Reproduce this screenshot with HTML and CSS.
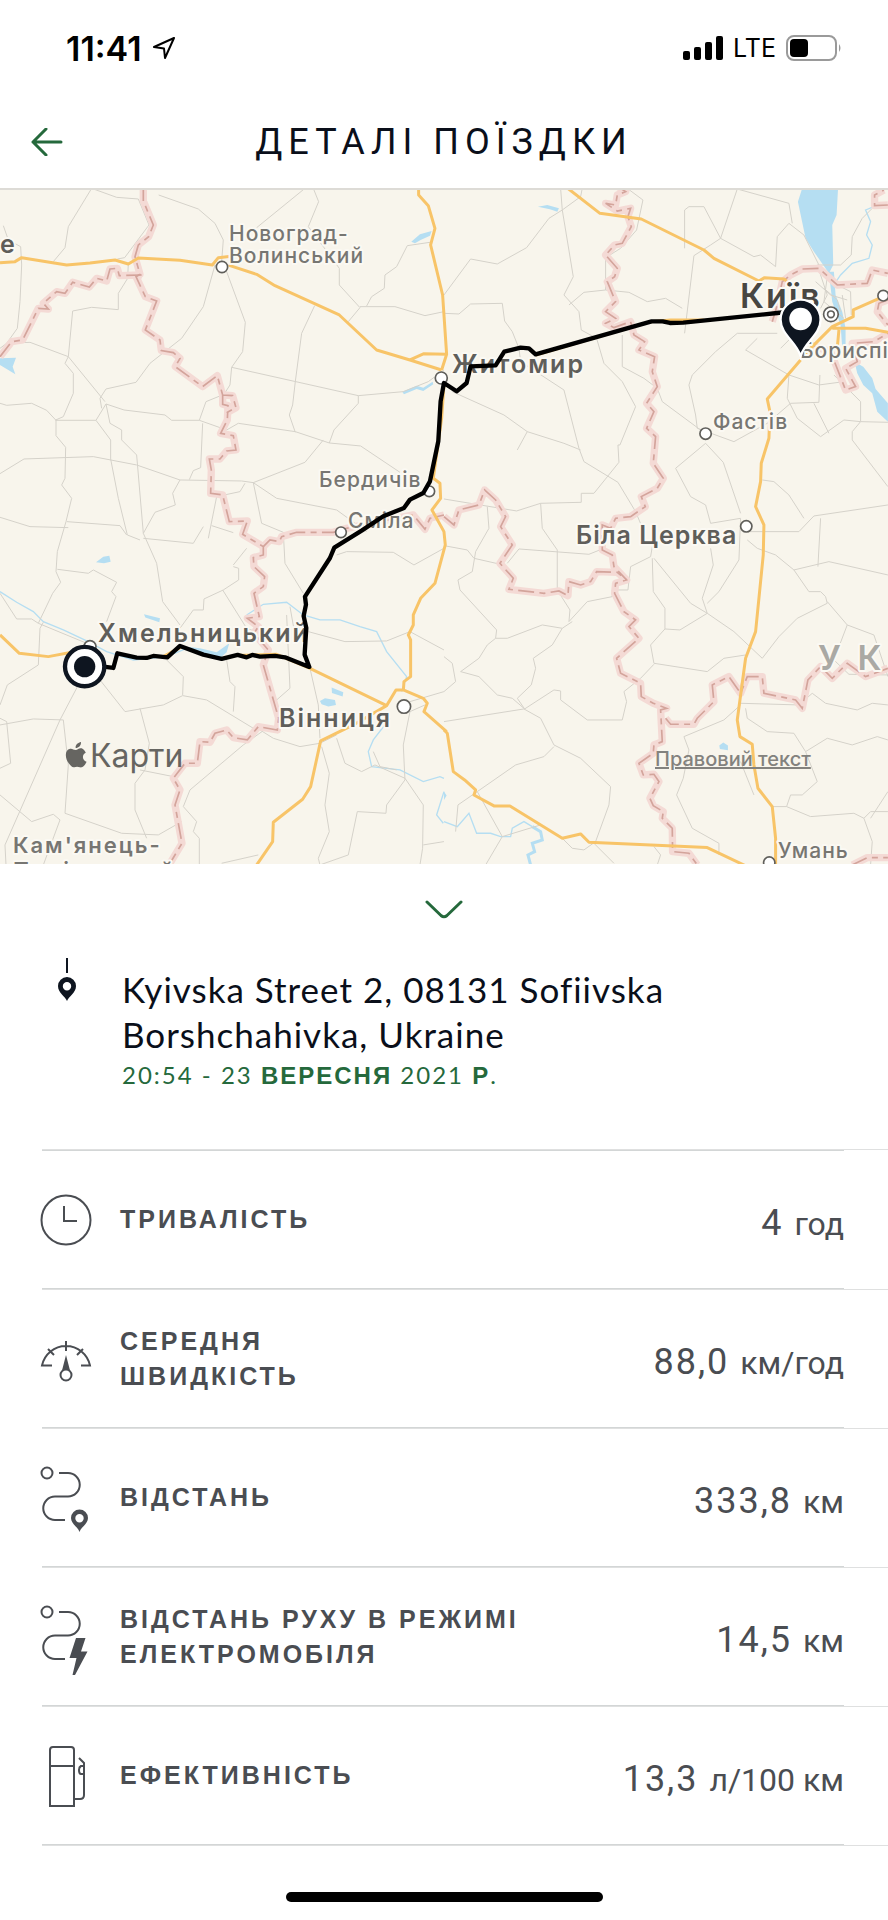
FILE: index.html
```html
<!DOCTYPE html>
<html lang="uk">
<head>
  <meta charset="UTF-8">
  <meta name="viewport" content="width=device-width, initial-scale=1.0">
  <title>Деталі поїздки</title>
  <link rel="stylesheet" href="styles.css">
</head>
<body>
  <div class="status-bar">
    <div class="status-left">
      <span class="time">11:41</span>
      <svg width="24" height="24" viewBox="0 0 24 24" fill="none" stroke="#000" stroke-width="2" stroke-linejoin="round"><path d="M22 2 L2 11 L12 12.500 L13 22 Z"/></svg>
    </div>
    <div class="status-right">
      <svg width="40" height="24" viewBox="0 0 40 24"><rect x="0" y="15" width="7" height="9" rx="2"/><rect x="11" y="11" width="7" height="13" rx="2"/><rect x="22" y="6" width="7" height="18" rx="2"/><rect x="33" y="0" width="7" height="24" rx="2"/></svg>
      <span class="network">LTE</span>
      <svg width="56" height="26" viewBox="0 0 56 26"><rect x="1" y="1" width="49" height="24" rx="7" fill="none" stroke="#9a9a9a" stroke-width="2"/><path d="M53 9 Q56 13 53 17 Z" fill="#9a9a9a"/><rect x="4" y="4" width="18" height="18" rx="4"/></svg>
    </div>
  </div>

  <header class="header">
    <button class="back" type="button" aria-label="Назад">
      <svg width="32" height="28" viewBox="0 0 32 28" fill="none" stroke="#25693c" stroke-width="3" stroke-linecap="round" stroke-linejoin="round"><path d="M30 14 H2 M15 1 L2 14 L15 27"/></svg>
    </button>
    <h1>ДЕТАЛІ ПОЇЗДКИ</h1>
  </header>

  <div class="map">
    <svg viewBox="0 2 888 674" preserveAspectRatio="xMidYMid slice">
      <defs>
        <!-- region borders, drawn twice: wide glow and dashed line -->
        <g id="borders">
          <g transform="translate(0 -9)">
            <path d="M430 0 L430 48 L460 120 L446 155 L415 180 L405 215 L420 268 L408 275 L436 335 L470 348 L436 435 L480 465 L484 497 L520 503 L540 520 L526 545 L608 605 L652 572 L668 630 L698 632 L708 668 L680 683 M668 630 L668 658 L684 662 L682 705 L662 745 L700 752 L708 795 L680 798 L660 822 L628 822 L634 855 L632 925 L668 930 L688 1010 L742 1008 L728 1048 L790 1085 L790 1110 L760 1118 L762 1145 L794 1175 L790 1205 L762 1225 L778 1295 L742 1300 L775 1325 L762 1345 L805 1395 L790 1440 L836 1600 L832 1635 L775 1625 L742 1665 L700 1658 L680 1635 L645 1645 L630 1672 L600 1670 L592 1735 L555 1735 L520 1780 L540 1815 L525 1860 L546 1975 L510 2035"/>
            <path d="M0 515 L35 470 L68 465 L115 370 L145 372 L130 355 L170 320 L195 325 L218 292 L268 306 L290 280 L320 288 L330 252 L352 250 L358 272 L425 270"/>
            <path d="M790 1085 L810 1065 L838 1070 L845 1055 L890 1042 L1000 1042 L1040 1030 L1240 990 L1275 1033 L1290 1000 L1332 990"/>
          </g>
          <g transform="translate(1332 -9)">
            <path d="M515 0 L545 20 L520 30 L515 60 L485 55 L520 78 L560 70 L552 95 L562 125 L535 175 L512 180 L485 210 L520 250 L512 275 L490 290 L515 350 L485 380 L515 400 L485 415 L510 428 L560 410 L570 450 L602 470 L585 495 L632 515 L625 560 L640 605 L608 655 L630 680 L608 730 L635 755 L628 835 L658 880 L640 910 L592 935 L604 965 L560 995 L515 1000 L500 1030 L475 1020 L475 1095 L505 1110 L510 1145 L548 1185 L515 1195 L512 1225 L540 1280 L575 1305 L555 1325 L585 1360 L518 1420 L530 1465 L590 1495 L592 1535 L628 1555 L668 1570 L650 1575 L655 1670 L630 1680 L628 1705 L585 1735 L598 1770 L630 1768 L645 1790 L618 1840 L628 1862 L658 1880 L655 1900 L685 1930 L686 2000 L735 2005 L760 2040"/>
            <path d="M0 995 L30 1020 L45 975 L105 960 L122 915 L155 945 L185 995 L170 1025 L205 1080 L168 1135 L208 1180 L195 1213 L300 1225 L345 1218 L372 1232 L375 1190 L410 1200 L440 1190 L458 1160 L520 1162 L548 1185"/>
            <path d="M665 1600 L680 1618 L750 1618 L760 1600 L810 1550 L805 1500 L855 1475 L890 1525 L910 1475 L955 1475 L960 1525 L1055 1545 L1075 1570 L1092 1485 L1130 1445 L1165 1480 L1210 1435 L1265 1475 L1332 1450"/>
            <path d="M985 410 L1000 360 L1015 290 L1040 270 L1075 252 L1125 250 L1180 300 L1270 295 L1285 255 L1332 265 M1332 345 L1305 355 L1300 380 L1332 420 M1332 60 L1292 62 L1292 30 L1320 15"/>
            <path d="M1100 480 L1160 500 L1205 615 L1235 605 L1205 550 L1240 530 L1225 475 L1290 470 L1332 445"/>
            <path d="M1225 2040 L1270 2018 L1332 2018"/>
          </g>
        </g>
      </defs>

      <rect width="888" height="676" fill="#f8f5ec"/>

      <g transform="scale(.3333)">
        <!-- lakes and rivers -->
        <g class="water" transform="translate(0 -9)">
          <path d="M0 520 L48 518 L38 545 L46 568 L0 540 Z M1234 170 L1260 148 L1295 138 L1290 152 L1262 165 L1245 175 Z M1207 620 L1250 602 L1270 608 L1298 590 L1300 598 L1270 618 L1250 612 L1212 628 Z M288 1132 L310 1115 L328 1112 L332 1130 L312 1135 Z M432 1288 L480 1300 L478 1312 L436 1298 Z M960 1548 L975 1540 L1005 1545 L1008 1560 L985 1565 L965 1558 Z M995 1508 L1030 1522 L1028 1535 L996 1524 Z M555 1385 L600 1390 L650 1402 L688 1375 L680 1402 L660 1420 L600 1408 Z"/>
        </g>
        <g class="water" transform="translate(1332 -9)">
          <path d="M1078 0 L1183 0 L1178 90 L1165 120 L1168 240 L1155 265 L1110 200 L1085 160 L1062 50 Z M1155 260 L1170 260 L1175 330 L1195 380 L1205 430 L1205 500 L1195 490 L1190 420 L1165 350 Z M1232 530 L1258 545 L1285 580 L1295 612 L1332 655 L1332 710 L1300 680 L1285 625 L1258 600 L1240 565 Z M282 65 L310 60 L345 70 L340 80 L318 73 Z M826 1682 L838 1673 L852 1682 L852 1696 L828 1692 Z M0 1820 L8 1832 L0 1845 Z"/>
        </g>
        <g class="river" transform="translate(0 -9)">
          <path d="M0 1220 L50 1252 L100 1280 L130 1310 L190 1335 L260 1368 L320 1400 L400 1425 L500 1415 L560 1390"/>
          <path d="M740 1290 L790 1258 L860 1252 L910 1290 L960 1305 L1020 1305 L1080 1325 L1130 1340 L1160 1400 L1220 1475 L1205 1520 M1170 1600 L1120 1665 L1105 1700 L1115 1745 L1200 1755 L1270 1790 L1320 1775 L1332 1780 M1332 1820 L1310 1890 L1330 1915"/>
        </g>
        <g class="river" transform="translate(1332 -9)">
          <path d="M1290 65 L1265 75 L1280 110 L1268 150 L1285 180 L1275 220 L1225 235 L1190 270 L1170 300"/>
          <path d="M0 1910 L40 1925 L75 1885 L98 1945 L140 1945 L170 1955 L200 1955 L205 1930 L240 1910 L265 1925"/>
          <path class="river-wide" d="M265 1925 L290 1940 L295 1965 L265 1975 L272 2000 L252 2010 L260 2040"/>
        </g>

        <!-- secondary roads -->
        <g class="road" transform="translate(0 -9)">
          <path d="M275 10 L205 125 L195 188 L160 230 M275 10 L350 37 L415 42 L447 120 L374 218 L352 222 M476 30 L595 72 L645 115 L670 165 L665 230 M915 10 L770 128 M940 10 L956 50 L925 125 L970 185 L1018 250 L1018 300 L1080 368 L1045 410 M1290 172 L1222 182 L1190 245 L1155 270 L1153 310 L1115 335 L1100 363 M1080 365 L1185 365 L1275 392 L1332 380"/>
          <path d="M10 122 L25 165 L62 185 L65 240 L60 350 L52 430 L20 475 L0 490 M20 475 L90 472 L205 515 L195 535 L220 565 L220 625 L190 695 L165 706 M385 235 L383 280 L355 325 L355 374 L275 367 L218 378 L205 515 L315 650 M645 240 L610 365 L545 460 L450 535 L408 592 L318 612 L300 640 L305 670 M680 260 L736 412 L728 500 L695 547 L690 600 L672 628 L618 650 L598 706 M695 547 L1075 632 L1210 620 L1285 590 L1332 555"/>
          <path d="M944 362 L905 445 L886 590 L878 660 L868 690 L886 742 M1075 632 L1075 655 L1002 735 L988 774 M0 655 L20 661 L95 655 L140 676 L168 706 L288 706 L318 657 L372 675 L495 690 L515 706 L598 706 L680 735 L715 715 L886 740 L988 774 L1082 783 L1200 862 M168 706 L168 752 L197 787 L195 880 L185 900 L215 940 L198 1010 L172 1100 L168 1160 L182 1192 L158 1225 L115 1315 M288 706 L332 765 L332 822 L355 940 L382 1050 L420 1065 M318 657 L330 715 L365 735 L365 765 L410 810 L430 1045"/>
          <path d="M0 866 L72 822 L280 815 L410 840 L540 885 L725 888 L760 893 L915 832 L970 765 M608 715 L602 848 L580 857 L568 884 M540 885 L518 925 L526 960 L465 982 L430 1045 L470 1135 L488 1250 L540 1320 M760 893 L785 1015 L850 1042 L855 1135 L910 1225 M735 895 L720 920 L650 935 L625 1060 M635 1022 L700 1043 M760 893 L830 940 L1010 975 L1100 1040 M0 997 L90 1025 L205 1028 M200 1010 L360 1022 L380 1050"/>
          <path d="M172 1153 L265 1165 L280 1155 L350 1192 L335 1220 L348 1235 L320 1310 M430 1060 L580 1075 L610 1025 M700 1140 L740 1090 M700 1145 L716 1150 L716 1185 L670 1215 L612 1242 L610 1275 L580 1275 L540 1330 M668 1215 L740 1330 L780 1345 M1010 1110 L1040 1100 L1180 1102 L1242 1140 L1332 1090 M925 1340 L1035 1370 L1160 1368 L1230 1340 L1332 1395 M0 1225 L50 1302 L95 1302 L115 1315 L260 1375 M130 1312 L120 1330 L115 1440 L22 1500 L0 1560"/>
          <path d="M235 1500 L180 1605 L15 1980 L18 2040 M300 1485 L375 1580 L490 1560 L548 1532 L620 1545 L760 1630 L800 1630 L730 1680 L570 1815 L550 1865 L590 1910 L580 1940 L598 1960 L598 2040 M500 1425 L550 1475 L548 1530 M680 1425 L690 1490 L705 1505 L700 1580 M780 1635 L820 1660 L900 1685 L960 1675 L1010 1650 M860 1290 L870 1510 L830 1545 M870 1265 L885 1350 M930 1450 L955 1560 L960 1660 M0 1620 L100 1602 L190 1605 L205 1740 L195 1885 L365 1945 L475 1950 L545 1910 M420 1570 L448 1675 L435 1755 L405 1795 L405 1875 L440 1960"/>
          <path d="M0 1600 L20 1610 L32 1735 L0 1750 M0 1830 L95 1910 L160 1888 L180 1905 L130 2040 M420 1755 L520 1775 M965 1685 L988 1765 L975 1860 L988 1940 L955 2020 L960 2040 L1045 2010 L1072 1880 L1158 1885 L1160 1860 L1215 1785 L1210 1680 L1230 1580 L1275 1560 M1010 1660 L1035 1735 L1085 1760 L1125 1740 L1215 1780 L1270 1860 L1268 1990 L1260 2040 M1120 1700 L1140 1745 L1190 1755 M1230 1550 L1332 1520 M665 2035 L775 2010 M1270 1980 L1332 1970"/>
        </g>
        <g class="road" transform="translate(1332 -9)">
          <path d="M350 10 L355 75 L388 275 L360 330 L405 380 L412 435 L458 460 L480 535 L535 590 L575 665 L528 780 L522 780 L525 832 L450 925 L412 925 L412 952 L290 955 L218 978 L0 942 M415 10 L410 35 L355 75 L315 100 L248 188 L160 237 L80 222 L0 330 M0 385 L45 387 L80 357 L175 355 L182 408 L205 440 L225 490 L230 530 L360 615 L405 790 L420 830 L522 892 L575 980 L600 1040"/>
          <path d="M550 10 L597 45 L578 135 L530 190 L485 218 L485 315 L420 322 L375 360 M485 315 L555 322 L610 350 L665 340 L715 370 M880 12 L830 160 L800 180 L750 212 L722 445 M722 190 L722 75 L735 65 L780 65 L830 160 L930 215 L950 210 L995 245 L1000 155 L1035 115 L1080 150 L1130 250 M880 12 L1035 55 L1045 115 M1285 70 L1255 100 L1225 155 L1222 210 L1190 240 L1120 240 M535 450 L535 545 L600 580 L640 610 L655 650 L770 735 M1000 445 L880 445 L815 500 L745 570 L735 600 L755 690 L760 730 L870 770 L970 715 L1040 655 L1125 652 L1128 570"/>
          <path d="M1010 490 L1040 460 M940 460 L905 495 L1035 570 L1125 600 L1200 590 M1035 570 L1030 640 L1060 700 L1130 755 L1200 705 L1250 710 L1332 712 M1110 655 L1155 745 M1170 570 L1250 650 L1250 710 L1225 740 L1225 765 L1332 905 M785 775 L695 850 L740 935 L785 960 L800 1015 L890 1000 M785 775 L838 832 L890 985 M955 885 L990 890 L1035 930 L1080 1000 M905 1040 L1065 1040 L1110 993 L1332 960 M1130 1000 L1122 1145 M25 620 L180 690 L250 740 L360 775 L410 795 M250 740 L220 795"/>
          <path d="M130 965 L135 1030 L95 1100 L85 1160 L42 1185 L48 1215 L158 1335 L155 1360 L130 1380 L105 1420 L50 1460 M290 955 L295 1030 L340 1095 L340 1215 L378 1275 L375 1310 L430 1250 L505 1235 L505 1215 L552 1215 L560 1145 L620 1115 L625 1085 M0 1082 L70 1095 L90 1120 L165 1137 M190 1135 L225 1092 L435 1108 L475 1092 M155 1360 L190 1360 L295 1320 L355 1330 L385 1310 M355 1330 L325 1380 L268 1420 L275 1450 L262 1500 L220 1540 L242 1572 L330 1515 L350 1518 L350 1545 L430 1605 L535 1605 L548 1550 L540 1520 L590 1480 L630 1438"/>
          <path d="M630 1120 L740 1255 L790 1285 L775 1240 L808 1140 L800 1090 M625 1120 L628 1220 L663 1270 L663 1332 L708 1335 L790 1285 L870 1340 L955 1420 L1005 1355 L1060 1300 L1150 1255 L1145 1235 L1130 1220 L1095 1220 L1050 1155 L995 1110 L940 1090 L910 1065 M890 1000 L885 1125 L825 1220 L790 1255 M663 1332 L620 1380 L630 1435 L790 1460 L840 1420 L905 1410 M1050 1155 L1155 1130 L1332 1170 M1150 1250 L1210 1320 L1290 1350 L1332 1475 M1210 1320 L1170 1425 L1215 1468 L1332 1470"/>
          <path d="M0 1610 L240 1572 L290 1600 L330 1680 L410 1720 L500 1805 L495 1860 L455 1970 L420 1995 L385 1990 L355 1960 M330 1685 L300 1715 L215 1740 L100 1820 L42 1860 L35 1940 M100 1820 L175 1955 L125 2040 M175 1955 L290 1920 M0 1415 L25 1435 L35 1490 L0 1520 M50 1460 L105 1475 L160 1530 L205 1540 L242 1572 M890 1555 L1065 1560 L1105 1525 L1145 1555 L1240 1575 L1285 1555 L1332 1560 M890 1560 L840 1605 L720 1655 L735 1695 L718 1780 L698 1830 L745 1930 L825 1975 L825 2010 M905 1570 L910 1600 L970 1640 L1050 1645 L1085 1700 L1120 1790 L1075 1830 L1040 1830 L1028 1865 M1085 1700 L1150 1660 L1225 1680 L1300 1655 L1332 1665 M985 1865 L1028 1865 L1100 1895 L1230 1885 L1260 1900 L1280 1880 L1332 1880 M1260 1900 L1285 1970 L1280 2040 M1332 1820 L1280 1900 M890 1730 L930 1830 M450 1975 L510 2035 M630 1985 L650 2010 L640 2040"/>
        </g>
        <g class="street" transform="translate(1332 -9)">
          <path d="M1120 240 L1150 330 L1130 370 M1115 290 L1160 330 L1210 345 M1180 300 L1220 320 L1222 390 M1140 310 L1180 345 L1190 380 M1150 275 L1140 350 L1200 400 M1195 330 L1205 400"/>
        </g>

        <use href="#borders" class="border-glow"/>
        <use href="#borders" class="border-line"/>

        <!-- highways -->
        <g class="highway" transform="translate(0 -9)">
          <path d="M0 233 L45 230 L65 218 L200 240 L270 234 L345 225 L385 237 L415 219 L540 226 L637 240 L655 218 L700 213 L690 242 L770 268 L825 302 L1018 390 L1130 495 L1230 525 L1325 555 M1230 525 L1272 506 L1340 508 L1325 555 M1256 0 L1256 30 L1285 62 L1305 130 L1292 180 L1328 330 L1340 508"/>
          <path d="M1332 600 L1325 700 L1300 880 L1320 895 L1322 940 L1296 975 L1332 1040 L1336 1080 L1305 1195 L1262 1240 L1240 1290 L1240 1320 L1225 1350 L1232 1365 L1232 1475 L1212 1490 L1210 1520 M0 1350 L58 1405 L145 1415 L250 1395 M490 1415 L545 1385 M700 1412 L830 1408 L930 1450 L1160 1562 L1188 1515 L1210 1515 L1270 1540 L1282 1555 L1272 1580 L1340 1640 M1160 1562 L1060 1620 L962 1668 L932 1805 L908 1843 L820 1912 L818 1970 L770 2040"/>
        </g>
        <g class="highway" transform="translate(1332 -9)">
          <path d="M365 5 L468 85 L592 102 L780 195 L810 220 L945 288 L962 278 L1020 282 L1030 290 M275 510 L620 410 L680 405 L780 405 M1070 525 L970 642 L978 680 L975 760 L952 835 L950 890 L935 965 L960 1020 L958 1110 L935 1340 L905 1420 L880 1605 L888 1655 L925 1678 L930 1740 L942 1810 L985 1865 L995 1960 L995 2040"/>
          <path d="M1070 520 L1165 425 L1228 395 L1228 375 L1318 335 M1165 430 L1265 430 L1332 442 M1185 435 L1180 490"/>
          <path d="M0 1635 L10 1645 L28 1760 L62 1785 L95 1815 L90 1830 L150 1863 L198 1863 L355 1960 L410 1947 L435 1972 L790 1988 L910 2045"/>
        </g>

        <!-- cities -->
        <g class="city">
          <circle cx="666" cy="237" r="17"/><circle cx="1324" cy="570" r="18"/><circle cx="1288" cy="910" r="16"/><circle cx="1023" cy="1033" r="16"/>
          <circle cx="2117" cy="737" r="17"/><circle cx="2239" cy="1015" r="17"/><circle cx="270" cy="1376" r="18"/><circle cx="1212" cy="1556" r="20"/>
          <circle cx="2308" cy="2024" r="17"/><circle cx="2650" cy="323" r="16"/><circle cx="2493" cy="379" r="22"/><circle cx="2493" cy="379" r="10"/>
        </g>
      </g>

      <g class="labels">
        <g class="town">
          <text x="229" y="53">Новоград-</text>
          <text x="229" y="75">Волинський</text>
          <text x="319" y="299">Бердичів</text>
          <text x="348" y="340">Сміла</text>
          <text x="800" y="170">Бориспі</text>
          <text x="713" y="241">Фастів</text>
          <text x="778" y="670">Умань</text>
          <text class="bold" x="13" y="665">Кам'янець-</text>
          <text class="bold" x="13" y="690">Подільський</text>
        </g>
        <g class="centre">
          <text x="0" y="65">е</text>
          <text x="452" y="185">Житомир</text>
          <text class="tight" x="576" y="356">Біла Церква</text>
          <text x="98" y="454">Хмельницький</text>
          <text x="279" y="539">Вінниця</text>
        </g>
        <text class="capital" x="740" y="120">Київ</text>
        <text class="country" x="818" y="482">У К</text>
        <a href="#legal"><text class="legal" x="655" y="578">Правовий текст</text></a>
        <g class="brand">
          <text x="90" y="579">Карти</text>
          <path transform="translate(6.200 121.900) scale(.92 .79)" d="M82 555 C79 554 78 557 75.500 557 C73 557 72 555 69.500 555.500 C63 557 64 568 68 574 C70 577 71.500 579.500 74 579 C76 578 78 578 80 579 C83 580 86 576 87.300 572 C82.500 570 82 563 86.500 560.500 C85.500 558 84 556 82 555 Z M75.500 554.500 C75 551 78 547.500 81.300 547 C81.500 551 79 554.500 75.500 554.500 Z"/>
        </g>
      </g>

      <g transform="scale(.3333)">
        <path class="route" d="M2402 368 L2332 375 L2050 404 L2010 405 L1988 400 L1955 400 L1607 499 L1587 481 L1562 479 L1513 491 L1487 532 L1412 535 L1400 585 L1370 610 L1332 585 L1322 640 L1315 760 L1290 880 L1270 915 L1230 935 L1212 960 L1150 985 L1085 1028 L1003 1079 L990 1110 L915 1226 L918 1250 L911 1284 L919 1320 L914 1400 L928 1437 L855 1408 L825 1404 L780 1406 L757 1401 L740 1408 L713 1401 L665 1413 L610 1400 L540 1374 L502 1408 L460 1404 L440 1410 L410 1409 L352 1396 L340 1440 L310 1436"/>
        <circle cx="254" cy="1436" r="59" fill="#fff" stroke="#0e1520" stroke-width="13"/>
        <circle cx="254" cy="1436" r="32" fill="#0e1520"/>
        <path d="M2402 504 C2390 462 2342 440 2342 395 A60 60 0 0 1 2462 395 C2462 440 2414 462 2402 504 Z" fill="#0e1520" stroke="#fff" stroke-width="7"/>
        <circle cx="2402" cy="393" r="34" fill="#fff"/>
      </g>
    </svg>
  </div>

  <main class="details">
    <button class="collapse" type="button" aria-label="Згорнути">
      <svg width="38" height="20" viewBox="0 0 38 20" fill="none" stroke="#25693c" stroke-width="3" stroke-linecap="round"><path d="M2 2 L16 15.500 Q19 18 22 15.500 L36 2"/></svg>
    </button>

    <div class="place">
      <svg class="place-icon" width="18" height="44" viewBox="0 0 18 44"><path d="M9 0 V15" stroke="#0e1520" stroke-width="2"/><path fill="#0e1520" fill-rule="evenodd" d="M9 43 C7 38 0 35 0 28 A9 9 0 0 1 18 28 C18 35 11 38 9 43 Z M9 24 A4.200 4.200 0 1 0 9 32.400 A4.200 4.200 0 1 0 9 24 Z"/></svg>
      <div>
        <p class="address">Kyivska Street 2, 08131 Sofiivska Borshchahivka, Ukraine</p>
        <p class="date">20:54 - 23 <b>ВЕРЕСНЯ</b> 2021 <b>Р</b>.</p>
      </div>
    </div>

    <dl class="stats">
      <div class="row">
        <div class="row-inner">
          <svg class="icon" width="52" height="64" viewBox="0 0 52 64"><circle cx="26" cy="32" r="24.500"/><path d="M24 18 V33 H37"/></svg>
          <dt>ТРИВАЛІСТЬ</dt>
          <dd>4 <small>год</small></dd>
        </div>
      </div>
      <div class="row">
        <div class="row-inner">
          <svg class="icon" width="52" height="64" viewBox="0 0 52 64"><path d="M12 38.500 H2 A24.500 24.500 0 0 1 50 38.500 H41 M26 14 V24 M8 22 L14 28 M43 22 L37 28"/><circle cx="26" cy="48" r="5.500"/><path class="solid" d="M26 28 L22 43.500 Q26 41 30 43.500 Z"/></svg>
          <dt>СЕРЕДНЯ<br>ШВИДКІСТЬ</dt>
          <dd>88,0 <small>км/год</small></dd>
        </div>
      </div>
      <div class="row">
        <div class="row-inner">
          <svg class="icon" width="52" height="64" viewBox="0 0 52 64"><circle cx="7" cy="7" r="5.500"/><path d="M19 7 H28 A11.500 11.500 0 0 1 28 30.500 H15 A11.500 11.500 0 0 0 15 54 H25"/><path class="solid" fill-rule="evenodd" d="M39.500 66 C38 61 31 58 31 52 A8.500 8.500 0 0 1 48 52 C48 58 41 61 39.500 66 Z M39.500 48 A4.200 4.200 0 1 0 39.500 56.400 A4.200 4.200 0 1 0 39.500 48 Z"/></svg>
          <dt>ВІДСТАНЬ</dt>
          <dd>333,8 <small>км</small></dd>
        </div>
      </div>
      <div class="row">
        <div class="row-inner">
          <svg class="icon" width="52" height="64" viewBox="0 0 52 64"><circle cx="7" cy="7" r="5.500"/><path d="M19 7 H28 A11.500 11.500 0 0 1 28 30.500 H15 A11.500 11.500 0 0 0 15 54 H25"/><path class="solid" d="M36 33 H45.500 L41 46.500 H47.500 L35 70 H32.500 L36.500 53 H29.500 Z"/></svg>
          <dt>ВІДСТАНЬ РУХУ В РЕЖИМІ ЕЛЕКТРОМОБІЛЯ</dt>
          <dd>14,5 <small>км</small></dd>
        </div>
      </div>
      <div class="row">
        <div class="row-inner">
          <svg class="icon" width="52" height="64" viewBox="0 0 52 64"><path d="M10 62 V6 Q10 3 13 3 H31 Q34 3 34 6 V62 Z M10 22 H34 M39 14 L44 19 V51 Q44 55 40 55 H34 M44 22 H41 Q39 23 39 26 Q39 30 41 30 H44"/></svg>
          <dt>ЕФЕКТИВНІСТЬ</dt>
          <dd>13,3 <small>л/100 км</small></dd>
        </div>
      </div>
    </dl>
  </main>

  <div class="home-indicator"></div>
</body>
</html>
```
FILE: styles.css
```css
* {
  box-sizing: border-box;
}
body {
  margin: 0;
  background-color: #fff;
  color: #0a0f1a;
  font-family: Roboto, Arial, sans-serif;
}
h1, p, dl, dt, dd {
  margin: 0;
}
button {
  display: flex;
  padding: 0;
  border: none;
  background: none;
  cursor: pointer;
}
svg {
  display: block;
}

/* Status bar */
.status-bar {
  display: flex;
  justify-content: space-between;
  align-items: center;
  height: 96px;
  padding: 0 46px 0 66px;
  color: #000;
  font-family: Inter, sans-serif;
}
.status-left, .status-right {
  display: flex;
  align-items: center;
  gap: 10px;
}
.time {
  font-size: 34px;
  font-weight: 600;
}
.network {
  font-size: 25px;
}

/* Header */
.header {
  display: grid;
  grid-template-columns: 32px 1fr 32px;
  align-items: center;
  height: 92px;
  padding: 0 31px;
}
h1 {
  text-align: center;
  font-size: 36px;
  font-weight: 400;
  letter-spacing: 6px;
}

/* Map */
.map {
  border-top: 2px solid #dddbd6;
}
.map svg {
  width: 100%;
}
.water {
  fill: #b5def2;
}
.river {
  fill: none;
  stroke: #b5def2;
  stroke-width: 4;
}
.river-wide {
  stroke-width: 9;
}
.road, .street {
  fill: none;
  stroke: #d5d2ca;
  stroke-width: 3;
}
.border-glow {
  fill: none;
  stroke: #f4dad5;
  stroke-width: 22;
  stroke-linejoin: round;
}
.border-line {
  fill: none;
  stroke: #d3a49b;
  stroke-width: 5;
  stroke-dasharray: 48 16 18 16;
}
.highway {
  fill: none;
  stroke: #f8c468;
  stroke-width: 9;
  stroke-linejoin: round;
}
.city {
  fill: #fff;
  stroke: #5f5e5a;
  stroke-width: 5;
}
.route {
  fill: none;
  stroke: #000;
  stroke-width: 13;
  stroke-linejoin: round;
}
.labels {
  font-family: Inter, sans-serif;
}
.town, .centre, .capital, .country {
  paint-order: stroke;
  stroke: #fbf9f3;
  stroke-width: 4;
  stroke-linejoin: round;
}
.town {
  fill: #777672;
  font-size: 21px;
  font-weight: 500;
  letter-spacing: 1px;
}
.town .bold {
  font-size: 22px;
  font-weight: 600;
  letter-spacing: 2px;
}
.centre {
  fill: #5f5e5a;
  font-size: 25px;
  font-weight: 600;
  letter-spacing: 2px;
}
.centre .tight {
  letter-spacing: 1px;
}
.capital {
  fill: #484743;
  font-size: 34px;
  font-weight: 600;
  letter-spacing: 2px;
}
.country {
  fill: #aaa9a4;
  font-size: 34px;
  font-weight: 600;
  letter-spacing: 4px;
}
.legal {
  fill: #83827e;
  font-size: 20px;
  font-weight: 500;
  text-decoration: underline;
}
.brand {
  fill: #666561;
  font-size: 32px;
}

/* Trip details */
.details {
  padding-top: 36px;
}
.collapse {
  margin: 0 auto;
}
.place {
  display: flex;
  gap: 46px;
  padding: 38px 58px 55px;
}
.place-icon {
  flex: none;
}
.address {
  max-width: 600px;
  padding-top: 9px;
  font-family: Lato, sans-serif;
  font-size: 35px;
  line-height: 45px;
  letter-spacing: 1px;
}
.date {
  color: #25693c;
  font-family: Lato, sans-serif;
  font-size: 24px;
  line-height: 36px;
  letter-spacing: 2px;
}
.date b {
  font-family: "Liberation Sans", Arial, sans-serif;
}
.stats {
  margin-left: 42px;
  border-top: 1px solid #dfe0e0;
  color: #4a4d52;
}
.row {
  border-bottom: 1px solid #dfe0e0;
}
.row-inner {
  display: flex;
  align-items: center;
  height: 138px;
  margin-right: 44px;
  border-bottom: 1px solid #d3d6d6;
}
.row:first-child .row-inner {
  height: 139px;
  border-top: 1px solid #d3d6d6;
}
.icon {
  flex: none;
  margin-left: -2px;
  margin-right: 28px;
  overflow: visible;
  fill: none;
  stroke: currentColor;
  stroke-width: 2;
}
.icon .solid {
  fill: currentColor;
  stroke: none;
}
dt {
  flex: 1;
  max-width: 430px;
  font-family: "Liberation Sans", Arial, sans-serif;
  font-size: 25px;
  font-weight: 700;
  line-height: 35px;
  letter-spacing: 3px;
}
dd {
  margin-left: auto;
  padding-top: 6px;
  font-size: 36px;
  letter-spacing: 2px;
}
dd small {
  font-size: 32px;
  letter-spacing: 0;
}

.home-indicator {
  width: 317px;
  height: 10px;
  margin: 46px auto 18px;
  border-radius: 5px;
  background-color: #000;
}
```
